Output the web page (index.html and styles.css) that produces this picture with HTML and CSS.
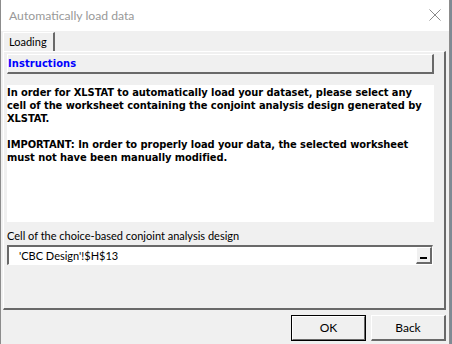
FILE: index.html
```html
<!DOCTYPE html>
<html lang="en">

<head>
    <meta charset="UTF-8">
    <title>Automatically load data</title>
    <link rel="stylesheet" href="styles.css">
</head>

<body>
    <div class="window">
        <div class="titlebar">
            <span class="title">Automatically load data</span>
            <svg class="close" width="12" height="12" viewBox="0 0 12 12">
                <path d="M0.5 0.5 L11.5 11.5 M11.5 0.5 L0.5 11.5" stroke="#8a8a8a" stroke-width="1" fill="none" />
            </svg>
        </div>
        <div class="content">
            <div class="tabs">
                <div class="tab">Loading</div>
            </div>
            <div class="panel">
                <div class="section-head">Instructions</div>
                <div class="instructions">
                    <p>In order for XLSTAT to automatically load your dataset, please select any cell of the worksheet containing the conjoint analysis design generated by XLSTAT.</p>
                    <p>IMPORTANT: In order to properly load your data, the selected worksheet must not have been manually modified.</p>
                </div>
                <div class="field-label">Cell of the choice-based conjoint analysis design</div>
                <div class="ref-input">
                    <span class="ref-value">'CBC Design'!$H$13</span>
                    <div class="ref-btn"><span class="ref-bar"></span></div>
                </div>
            </div>
            <div class="actions">
                <div class="btn default"><span class="btn-face">OK</span></div>
                <div class="btn"><span class="btn-face">Back</span></div>
            </div>
        </div>
    </div>
</body>

</html>
```

FILE: styles.css
```css
html {
    background: #7f8a94;
}

body {
    margin: 0;
    width: 452px;
    height: 344px;
    overflow: hidden;
    font-family: Lato, 'Noto Sans', sans-serif;
    font-size: 11px;
}

.window {
    width: 448px;
    height: 344px;
    border-left: 1px solid #8c8c8c;
    border-right: 1px solid #8c8c8c;
    display: flex;
    flex-direction: column;
}

.titlebar {
    height: 31px;
    background: #fff;
    display: flex;
    align-items: center;
    justify-content: space-between;
    padding: 0 8px 0 8px;
}

.title {
    color: #999;
    font-size: 12.2px;
    margin-top: -1px;
}

.close {
    margin-top: -1px;
}

.content {
    flex: 1;
    background: #f0f0f0;
    padding: 1px 3px 0 2px;
}

.tabs {
    display: flex;
    height: 19px;
}

.tab {
    width: 52px;
    height: 19px;
    border-top: 1px solid #fff;
    border-left: 1px solid #fff;
    border-right: 2px solid #696969;
    box-sizing: border-box;
    padding-left: 5px;
    line-height: 18px;
    font-size: 11px;
    color: #000;
}

.panel {
    height: 259px;
    box-sizing: border-box;
    border-top: 1px solid #fff;
    border-left: 1px solid #fff;
    border-right: 2px solid #696969;
    border-bottom: 2px solid #696969;
    padding: 2px 10px 0 3px;
}

.section-head {
    height: 20px;
    box-sizing: border-box;
    border-top: 1px solid #fff;
    border-left: 1px solid #fff;
    border-right: 2px solid #696969;
    border-bottom: 2px solid #696969;
    color: #0000ff;
    font-family: 'DejaVu Sans Condensed', 'DejaVu Sans', sans-serif;
    font-stretch: condensed;
    font-weight: bold;
    font-size: 11px;
    letter-spacing: 0.1px;
    line-height: 17px;
}

.instructions {
    margin-top: 11px;
    height: 137px;
    background: #fff;
    font-family: 'DejaVu Sans Condensed', 'DejaVu Sans', sans-serif;
    font-stretch: condensed;
    font-weight: bold;
    font-size: 11px;
    letter-spacing: -0.05px;
    line-height: 13px;
    color: #000;
    padding: 1px 0 0 0;
    box-sizing: border-box;
}

.instructions p {
    margin: 0 0 13px 0;
}

.field-label {
    margin-top: 7px;
    line-height: 14px;
    color: #000;
}

.ref-input {
    margin-top: 2px;
    height: 20px;
    box-sizing: border-box;
    border-top: 2px solid #696969;
    border-left: 2px solid #696969;
    border-right: 1px solid #fff;
    border-bottom: 1px solid #fff;
    background: #fff;
    display: flex;
    align-items: center;
    justify-content: space-between;
    width: 426px;
}

.ref-value {
    padding-left: 10px;
    line-height: 17px;
}

.ref-btn {
    width: 16px;
    height: 17px;
    box-sizing: border-box;
    background: #f0f0f0;
    border-top: 1px solid #fff;
    border-left: 1px solid #fff;
    border-right: 2px solid #696969;
    border-bottom: 2px solid #696969;
    display: flex;
    align-items: flex-end;
    justify-content: center;
    padding-bottom: 3px;
    margin-right: 0;
}

.ref-bar {
    width: 7px;
    height: 2px;
    background: #000;
}

.actions {
    display: flex;
    justify-content: flex-end;
    gap: 5px;
    margin-top: 5px;
}

.btn {
    width: 75px;
    height: 26px;
    box-sizing: border-box;
    background: #f0f0f0;
    border-top: 1px solid #fff;
    border-left: 1px solid #fff;
    border-right: 2px solid #696969;
    border-bottom: 2px solid #696969;
    display: flex;
    color: #000;
}

.btn-face {
    flex: 1;
    text-align: center;
    line-height: 23px;
    font-size: 12px;
}

.btn.default {
    border: 1px solid #000;
}

.btn.default .btn-face {
    border-top: 1px solid #fff;
    border-left: 1px solid #fff;
    border-right: 1px solid #696969;
    border-bottom: 1px solid #696969;
    line-height: 22px;
}
```
